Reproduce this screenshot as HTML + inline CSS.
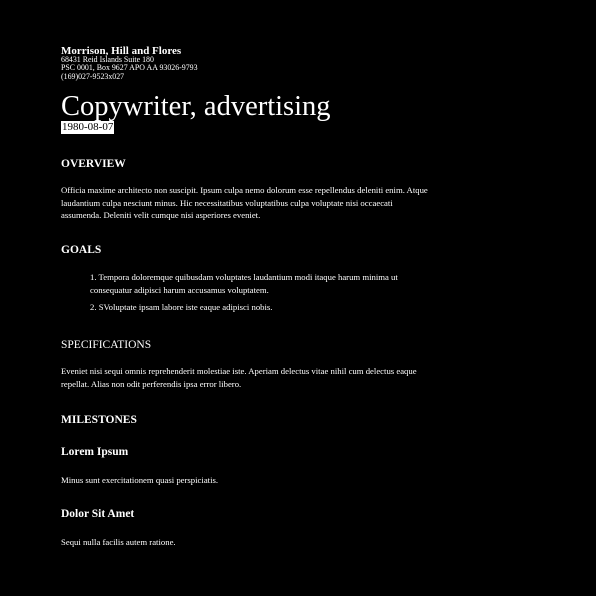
<!DOCTYPE html>
<html><head><meta charset="utf-8"><style>
html,body{margin:0;padding:0;background:#000;width:596px;height:596px;overflow:hidden}
body{font-family:"Liberation Serif",serif;color:#fff;position:relative}
.a{position:absolute;left:61px;white-space:nowrap}
.p{font-size:8.7px;line-height:12.5px}
.h{font-size:11.5px;font-weight:bold}
</style></head><body>
<div class="a" style="top:45px;font-size:11px;font-weight:bold;line-height:13px">Morrison, Hill and Flores</div>
<div class="a" style="top:56px;font-size:7.9px;line-height:8.3px">68431 Reid Islands Suite 180<br>PSC 0001, Box 9627 APO AA 93026-9793<br>(169)027-9523x027</div>
<div class="a" style="top:90px;font-size:28.5px;line-height:34px">Copywriter, advertising</div>
<div class="a" style="top:121px;font-size:11px;line-height:13px;background:#fff;color:#000;padding:0 1px;left:61px">1980-08-07</div>
<div class="a h" style="top:158px">OVERVIEW</div>
<div class="a p" style="top:184px">Officia maxime architecto non suscipit. Ipsum culpa nemo dolorum esse repellendus deleniti enim. Atque<br>laudantium culpa nesciunt minus. Hic necessitatibus voluptatibus culpa voluptate nisi occaecati<br>assumenda. Deleniti velit cumque nisi asperiores eveniet.</div>
<div class="a h" style="top:244px">GOALS</div>
<div class="a p" style="top:271px;left:90px">1. Tempora doloremque quibusdam voluptates laudantium modi itaque harum minima ut<br>consequatur adipisci harum accusamus voluptatem.</div>
<div class="a p" style="top:301px;left:90px">2. SVoluptate ipsam labore iste eaque adipisci nobis.</div>
<div class="a" style="top:339px;font-size:11.5px">SPECIFICATIONS</div>
<div class="a p" style="top:365px">Eveniet nisi sequi omnis reprehenderit molestiae iste. Aperiam delectus vitae nihil cum delectus eaque<br>repellat. Alias non odit perferendis ipsa error libero.</div>
<div class="a h" style="top:414px">MILESTONES</div>
<div class="a h" style="top:446px">Lorem Ipsum</div>
<div class="a p" style="top:474px">Minus sunt exercitationem quasi perspiciatis.</div>
<div class="a h" style="top:508px">Dolor Sit Amet</div>
<div class="a p" style="top:536px">Sequi nulla facilis autem ratione.</div>
</body></html>
